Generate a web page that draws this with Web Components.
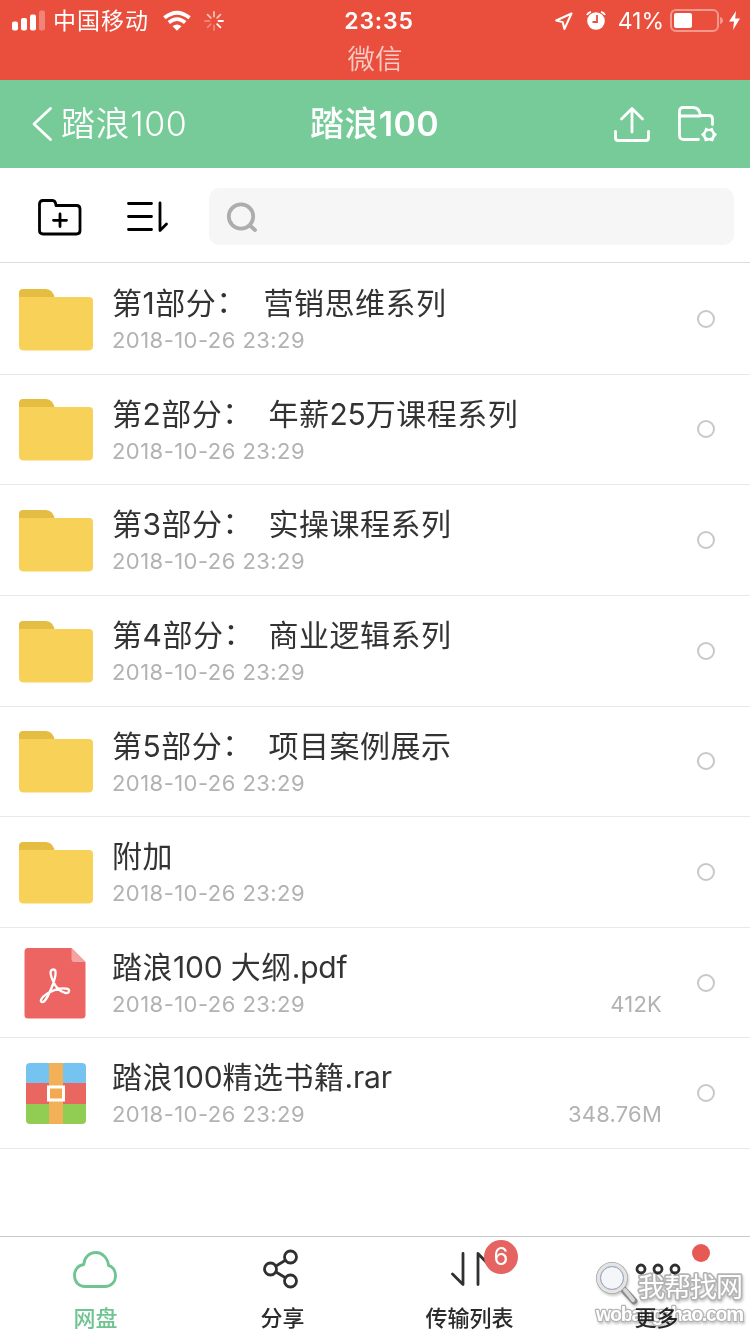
<!DOCTYPE html>
<html lang="zh-CN">
<head>
<meta charset="utf-8">
<title>踏浪100</title>
<style>
body{margin:0;background:#fff;font-family:Inter,"Noto Sans CJK SC",sans-serif;color:#333}
</style>
</head>
<body>
<cloud-app></cloud-app>
<script>
const define=(name,html)=>customElements.define(name,class extends HTMLElement{
  constructor(){
    super();
    const t=document.createElement('template');
    t.innerHTML='<style>*{box-sizing:border-box}svg{display:block;flex:none;overflow:visible}</style>'+html;
    this.attachShadow({mode:'open'}).append(t.content.cloneNode(true));
  }
});

define('status-bar',`<style>
:host{display:block;height:80px;background:#ea4f3d;color:#fff}
.top{height:41px;display:grid;grid-template-columns:1fr auto 1fr;align-items:center;padding:0 10px 0 12px}
.l,.r{display:flex;align-items:center}.r{justify-content:flex-end}
.car{font-size:23px;letter-spacing:1px;margin:0 14px 0 8px;line-height:30px}
.time{font-size:23px;font-weight:600;letter-spacing:.8px;transform:translateX(3px)}
.pct{font-size:23px;margin:0 6px 0 12px}
.app{font-size:27.500px;line-height:36px;text-align:center;opacity:.7;font-weight:350}
</style>
<div class="top"><div class="l">
<svg width="33" height="20" fill="#fff"><rect y="10.500" width="6" height="9" rx="2"/><rect x="9" y="7" width="6" height="12.500" rx="2"/><rect x="18" y="3.500" width="6" height="16" rx="2"/><rect x="27" y="-.5" width="6" height="20" rx="2" opacity=".3"/></svg>
<span class="car">中国移动</span>
<svg width="28" height="20" viewBox="0 0 28 20" fill="none" stroke="#fff" stroke-width="3.800"><path d="M1.400 6.800Q14-3.400 26.600 6.800M5.800 11.500Q14 4.800 22.200 11.500"/><path d="M9.500 15.300Q14 11.700 18.500 15.300L14 19.800Z" fill="#fff" stroke="none"/></svg>
<svg style="margin-left:13px" width="20" height="20" viewBox="-10 -10 20 20" stroke="#fff" stroke-width="1.800" stroke-linecap="round"><path d="M4.500 0H9M3.200 3.200 6.400 6.400"/><path opacity=".65" d="M0-4.500V-9M3.200-3.200 6.400-6.400M-3.200-3.200-6.400-6.400"/><path opacity=".3" d="M0 4.500V9M-4.500 0H-9M-3.200 3.200-6.400 6.400"/></svg>
</div><span class="time">23:35</span><div class="r">
<svg width="18" height="18" viewBox="0 0 18 18" fill="none" stroke="#fff" stroke-width="2" stroke-linejoin="round"><path d="M16.500 1.500 1.200 8.500 7.700 10.100 9.400 17Z"/></svg>
<svg style="margin-left:13px" width="20" height="19" viewBox="0 0 20 19" fill="none"><circle cx="10" cy="10" r="8.800" fill="#fff"/><path d="M1 4Q2 1.500 5 1M19 4Q18 1.500 15 1" stroke="#fff" stroke-width="2"/><path d="M11 4V11H6.500" stroke="#ea4f3d" stroke-width="1.800"/></svg>
<span class="pct">41%</span>
<svg width="53" height="23" viewBox="0 0 53 23"><rect x="1" y="1" width="47" height="21" rx="5" fill="none" stroke="#fff" stroke-width="2" opacity=".42"/><rect x="4" y="4" width="18" height="15" rx="2" fill="#fff"/><path d="M50 8Q53 9 53 11.500Q53 14 50 15Z" fill="#fff" opacity=".42"/></svg>
<svg style="margin-left:6px" width="11" height="19" viewBox="0 0 11 19" fill="#fff"><path d="M7 0 0 10.500H5L4 19 11 7.500H6.200Z"/></svg>
</div></div><div class="app">微信</div>`);

define('nav-bar',`<style>
:host{display:grid;grid-template-columns:1fr auto 1fr;align-items:center;height:88px;background:#77cb98;color:#fff;padding:0 33px 0 32px}
.b,.r{display:flex;align-items:center;font-size:34px;line-height:44px}.b{gap:9px;font-weight:350;letter-spacing:.6px}.r{justify-content:flex-end;gap:28px}
.t{font-size:34px;font-weight:500;line-height:44px;letter-spacing:.4px}
::slotted(b){font-weight:600}
</style>
<div class="b"><svg width="20" height="36" fill="none" stroke="#fff" stroke-width="2.800" stroke-linecap="round" stroke-linejoin="round"><path d="M18.500 2.500 2 18 18.500 33.500"/></svg><span><slot name="back"></slot></span></div>
<div class="t"><slot></slot></div>
<div class="r"><svg width="36" height="35" fill="none" stroke="#fff" stroke-width="2.800" stroke-linecap="round" stroke-linejoin="round"><path d="M18 25V2M7.500 12 18 1.500 28.500 12M1.500 24.500V31Q1.500 33.500 4 33.500H32Q34.500 33.500 34.500 31V24.500"/></svg>
<svg width="39" height="36" fill="none" stroke="#fff" stroke-width="2.800" stroke-linecap="round" stroke-linejoin="round"><path d="M20.500 33.500H6Q1.500 33.500 1.500 29.500V5Q1.500 1.500 5 1.500H15.500Q21.500 2 22.500 9.500H31Q34.500 9.500 34.500 13V18.500M2 10H22"/><path stroke="none" fill="#fff" fill-rule="evenodd" d="M27.500 21.500 31 23 34.500 21.500 36 25.500 39 28.500 36.500 31.500 35 35.500 31 34.500 27 35.500 25.500 31.500 23 28.500 26 25.500ZM31 25A3.500 3.500 0 1 0 31 32A3.500 3.500 0 1 0 31 25Z"/></svg></div>`);

define('tool-bar',`<style>
:host{display:flex;align-items:center;height:95px;padding:3px 16px 0 38px;border-bottom:1px solid #dcdcdc}
.s{flex:1;height:57px;border-radius:10px;background:#f6f6f6;display:flex;align-items:center;padding:2px 0 0 18px;margin:0 0 0 41px}
</style>
<svg style="margin-top:1px" width="44" height="37" fill="none" stroke="#000" stroke-width="2.800" stroke-linecap="round" stroke-linejoin="round"><path d="M1.500 5Q1.500 1.500 5 1.500H14.500Q17.500 1.500 18 6.500H38.500Q42 6.500 42 10V31.500Q42 35 38.500 35H5Q1.500 35 1.500 31.500ZM22 15V27.500M15.500 21.300H28.500"/></svg>
<svg style="margin:1px 0 0 44px" width="42" height="32" fill="none" stroke="#000" stroke-width="2.800" stroke-linecap="round" stroke-linejoin="round"><path d="M2.500 2.500H25.500M2.500 15.500H25.500M2.500 28.500H25.500M34 2V29.500L40.500 23"/></svg>
<div class="s"><svg width="31" height="31" fill="none" stroke="#adadad" stroke-width="3.800" stroke-linecap="round"><circle cx="14" cy="14.500" r="12.200"/><path d="M23.500 24 28 28"/></svg></div>`);

define('folder-icon',`<style>:host{display:block;margin-top:-1px}</style><svg width="74" height="62"><path d="M0 12V4Q0 0 4 0H27Q34 0 36 10H0Z" fill="#e6bd43"/><path d="M0 8H70Q74 8 74 12V57Q74 61.500 69 61.500H5Q0 61.500 0 57Z" fill="#f7d158"/></svg>`);
define('pdf-icon',`<style>:host{display:block;margin:-2px 2px 0 0}</style><svg width="62" height="71"><path d="M4 0H47.500L61.500 14V67Q61.500 70.500 58 70.500H4Q.5 70.500.5 67V4Q.5 0 4 0Z" fill="#ed6562"/><path d="M47.500 0 61.500 14H50Q47.500 14 47.500 11Z" fill="#f4a3a0"/><path fill="none" stroke="#fff" stroke-width="2.300" stroke-linejoin="round" d="M29.500 21.500C24.500 21.500 27 28.500 29 33C31.500 39 36 43.500 41 44.800C46.500 46 46.500 40.500 41 40.500C35 40 27 42.500 22 46.500C16.500 50 15.500 54 18.500 54C21.500 54 24.500 47 27.500 40C30.500 33 34 21.500 29.500 21.500Z"/></svg>`);
define('rar-icon',`<style>:host{display:block;margin-top:-2px}</style><svg width="60" height="62"><path d="M4 0H56Q60 0 60 4V20H0V4Q0 0 4 0Z" fill="#75c3f0"/><path d="M0 20H60V41H0Z" fill="#e96661"/><path d="M0 41H60V57Q60 61 56 61H4Q0 61 0 57Z" fill="#91cd53"/><path d="M23 0H37V61H23Z" fill="#f2b158"/><rect x="22.500" y="24" width="15" height="13" fill="#f2a94f" stroke="#fff" stroke-width="3"/></svg>`);

define('file-row',`<style>
:host{display:flex;height:110.65px;border-bottom:1px solid #e8e8e8;padding-right:35px}
.i{width:112px;display:flex;align-items:center;justify-content:center;padding-top:3px}
.m{flex:1;padding-top:18px}
.n{font-size:30px;line-height:42px;letter-spacing:.5px;white-space:pre;display:flex}
::slotted([slot=prefix]){width:var(--pw,156.5px)}
.d{display:flex;justify-content:space-between;font-size:22px;line-height:30px;color:#b2b2b2;letter-spacing:.45px;padding-top:1px}
.size{margin-right:35px;letter-spacing:.2px}
.c{align-self:center;width:18px;height:18px;border:2px solid #c8c8c8;border-radius:50%}
</style><div class="i"><slot name="icon"></slot></div><div class="m"><div class="n"><slot name="prefix"></slot><div><slot></slot></div></div><div class="d"><span>2018-10-26 23:29</span><span class="size"><slot name="size"></slot></span></div></div><div class="c"></div>`);

define('tab-item',`<style>
:host{display:flex;flex-direction:column;align-items:center;flex:1;position:relative;font-size:22px;font-weight:500;color:#2b2b2b}
.i{height:67px;display:flex;align-items:center;justify-content:center}
.t{line-height:32px;white-space:nowrap;padding-top:1px}
::slotted(.badge){position:absolute;left:108px;top:3px;width:34px;height:34px;border-radius:50%;background:#e56360;color:#fff;font-size:24px;line-height:34px;text-align:center;font-weight:400}
::slotted(.dot){position:absolute;left:129px;top:7px;width:18px;height:18px;border-radius:50%;background:#e65a53}
::slotted(svg){display:block;overflow:visible}
</style><div class="i"><slot name="icon"></slot></div><div class="t"><slot></slot></div><slot name="badge"></slot>`);

define('tab-bar',`<style>:host{display:flex;height:98px;border-top:1px solid #c7cbc9;padding-left:2px}svg{fill:none;stroke:#303030;stroke-width:2.800;stroke-linecap:round;stroke-linejoin:round}</style>
<tab-item style="color:#6fc491"><svg slot="icon" width="46" height="37" style="stroke:#6fc491"><path d="M12 35.500H32C38 35.500 42.500 31 42.500 25C42.500 19 39 15 35.500 14.500C35 7 29 1.500 23 1.500C16 1.500 11 7 10.800 13.500C5 14 1.500 19 1.500 24.500C1.500 31 6 35.500 12 35.500Z"/></svg>网盘</tab-item>
<tab-item><svg slot="icon" width="39" height="40"><circle cx="7.500" cy="20" r="6"/><circle cx="27.500" cy="8" r="6"/><circle cx="27.500" cy="32" r="6"/><path d="M13 17 22 11.500M13 23 22 28.500"/></svg>分享</tab-item>
<tab-item><svg slot="icon" width="38" height="34"><path d="M1.500 22 12 32.500V1.500M27 32.500V1.500L37 12"/></svg>传输列表<span slot="badge" class="badge">6</span></tab-item>
<tab-item><svg slot="icon" width="45" height="12"><circle cx="7" cy="6" r="4"/><circle cx="24" cy="6" r="4"/><circle cx="41" cy="6" r="4"/></svg>更多<span slot="badge" class="dot"></span></tab-item>`);

define('site-mark',`<style>:host{display:block;position:absolute;left:590px;top:1256px;pointer-events:none;mix-blend-mode:multiply}text{font-family:"Noto Sans CJK SC",sans-serif;font-weight:400;fill:#fff;stroke:#b4b4b4;stroke-width:3.400;paint-order:stroke;stroke-linejoin:round}svg{filter:drop-shadow(1px 2px 1px #0003)}</style>
<svg width="160" height="78"><path d="M33 33 44 45" stroke="#8b8b8b" stroke-width="7" stroke-linecap="round"/><path d="M35 34 43 44" stroke="#d7d7d7" stroke-width="4" stroke-linecap="round"/><circle cx="22" cy="22" r="13.500" fill="#f4f6fa" stroke="#a5a5a5" stroke-width="5"/><circle cx="22" cy="22" r="13.500" fill="none" stroke="#e4e4e4" stroke-width="3.500"/><circle cx="22" cy="22" r="11.500" fill="none" stroke="#9faec6" stroke-width="1"/>
<text x="48" y="41" font-size="27" textLength="105">我帮找网</text><text x="6" y="65" font-size="20" textLength="148" style="font-family:'Liberation Sans';font-weight:700;stroke-width:2.400">wobangzhao.com</text></svg>`);

define('cloud-app',`<style>
:host{display:flex;flex-direction:column;width:750px;height:1334px;position:relative;overflow:hidden;background:#fff}
main{flex:1;padding-top:1px}
u{text-decoration:none;letter-spacing:-.2px}
i{font-style:normal;position:relative;top:-2px}
</style>
<status-bar></status-bar>
<nav-bar><span slot="back">踏浪100</span>踏浪<b>100</b></nav-bar>
<tool-bar></tool-bar>
<main>
<file-row style="--pw:151.500px"><folder-icon slot="icon"></folder-icon><span slot="prefix">第1部分<i>：</i></span>营销思维系列</file-row>
<file-row><folder-icon slot="icon"></folder-icon><span slot="prefix">第2部分<i>：</i></span>年薪<u>25</u>万课程系列</file-row>
<file-row><folder-icon slot="icon"></folder-icon><span slot="prefix">第3部分<i>：</i></span>实操课程系列</file-row>
<file-row><folder-icon slot="icon"></folder-icon><span slot="prefix">第4部分<i>：</i></span>商业逻辑系列</file-row>
<file-row><folder-icon slot="icon"></folder-icon><span slot="prefix">第5部分<i>：</i></span>项目案例展示</file-row>
<file-row><folder-icon slot="icon"></folder-icon>附加</file-row>
<file-row><pdf-icon slot="icon"></pdf-icon>踏浪<u>100 </u>大纲<u>.pdf</u><span slot="size">412K</span></file-row>
<file-row><rar-icon slot="icon"></rar-icon>踏浪<u>100</u>精选书籍<u>.rar</u><span slot="size">348.76M</span></file-row>
</main>
<tab-bar></tab-bar>
<site-mark></site-mark>`);
</script>
</body>
</html>
